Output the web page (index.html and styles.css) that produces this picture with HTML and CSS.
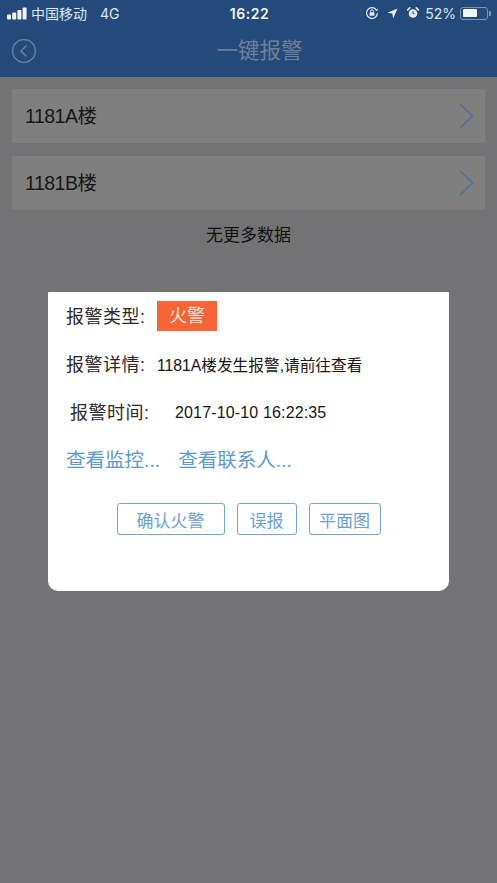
FILE: index.html
```html
<!DOCTYPE html>
<html lang="zh">
<head>
<meta charset="utf-8">
<title>一键报警</title>
<link rel="stylesheet" href="styles.css">
</head>
<body>
<div class="app">
  <header class="top">
    <div class="status">
      <div class="status-left">
        <svg class="signal" width="20" height="13" viewBox="0 0 20 13"><rect x="0" y="7.5" width="4" height="5" rx="1"/><rect x="5.2" y="5.5" width="4" height="7" rx="1"/><rect x="10.4" y="3" width="4" height="9.5" rx="1"/><rect x="15.6" y=".5" width="4" height="12" rx="1"/></svg>
        <span class="carrier">中国移动</span>
        <span class="net">4G</span>
      </div>
      <div class="clock">16:22</div>
      <div class="status-right">
        <svg class="st-icon" width="14" height="14" viewBox="0 0 14 14"><path d="M11.6 4.2A5.4 5.4 0 1 0 12.4 7" fill="none" stroke="#e6ebf2" stroke-width="1.2"/><path d="M10.2 4.4l2.2.4.3-2.3z" fill="#e6ebf2"/><rect x="4.6" y="6.2" width="4.8" height="3.6" rx=".5" fill="#e6ebf2"/><path d="M5.6 6.2V5.2a1.4 1.4 0 0 1 2.8 0v1" fill="none" stroke="#e6ebf2"/></svg>
        <svg class="st-icon arrow" width="11" height="11" viewBox="0 0 12 12"><path d="M11.5.5L.5 5.2l5.3.9.9 5.4z" fill="#e6ebf2"/></svg>
        <svg class="st-icon alarm" width="12" height="12" viewBox="0 0 14 14"><circle cx="7" cy="7.6" r="5" fill="#e6ebf2"/><path d="M7 4.8v3h2" fill="none" stroke="#234a7a" stroke-width="1"/><path d="M.8 3.4L3.2 1M13.2 3.4L10.8 1" stroke="#e6ebf2" stroke-width="1.8" stroke-linecap="round"/></svg>
        <span class="pct">52%</span>
        <span class="battery"><span class="battery-fill"></span></span>
        <span class="battery-tip"></span>
      </div>
    </div>
    <div class="navbar">
      <svg class="back" width="26" height="26" viewBox="0 0 26 26"><circle cx="13" cy="13" r="11.4" fill="none" stroke="#6b7f99" stroke-width="1.5"/><path d="M15.4 7.6L10 13l5.4 5.4" fill="none" stroke="#6b7f99" stroke-width="1.5"/></svg>
      <h1 class="title">一键报警</h1>
    </div>
  </header>

  <main class="list">
    <div class="row"><span class="row-name">1181A楼</span><svg class="chev" width="15" height="26" viewBox="0 0 15 26"><path d="M1.2 1L13.4 13 1.2 25" fill="none" stroke="#4f6f99" stroke-width="1.6"/></svg></div>
    <div class="row"><span class="row-name">1181B楼</span><svg class="chev" width="15" height="26" viewBox="0 0 15 26"><path d="M1.2 1L13.4 13 1.2 25" fill="none" stroke="#4f6f99" stroke-width="1.6"/></svg></div>
    <p class="nomore">无更多数据</p>
  </main>

  <section class="modal">
    <div class="field type-field">
      <span class="label">报警类型:</span>
      <span class="tag">火警</span>
    </div>
    <div class="field detail-field">
      <span class="label">报警详情:</span>
      <span class="value">1181A楼发生报警,请前往查看</span>
    </div>
    <div class="field time-field">
      <span class="label">报警时间:</span>
      <span class="value">2017-10-10 16:22:35</span>
    </div>
    <div class="links">
      <a class="link">查看监控...</a>
      <a class="link">查看联系人...</a>
    </div>
    <div class="actions">
      <button class="btn btn-confirm">确认火警</button>
      <button class="btn btn-false">误报</button>
      <button class="btn btn-plan">平面图</button>
    </div>
  </section>
</div>
</body>
</html>
```
FILE: styles.css
```css
* { box-sizing: border-box; }
html, body { margin: 0; padding: 0; }
body {
  width: 497px;
  height: 883px;
  overflow: hidden;
  background: #737375;
  font-family: "Liberation Sans", "Noto Sans CJK SC", sans-serif;
}
.app { position: relative; width: 497px; height: 883px; }

.top { height: 77px; background: #234a7a; }
.status {
  height: 26px;
  padding: 0 6px 0 7px;
  display: grid;
  grid-template-columns: 1fr auto 1fr;
  align-items: center;
  color: #dfe5ee;
  font-family: Inter, "Noto Sans CJK SC", sans-serif;
  font-size: 14px;
}
.status-left { display: flex; align-items: center; }
.signal { fill: #eef2f7; margin-right: 4px; flex: none; }
.net { margin-left: 13px; font-size: 14px; }
.clock { color: #f2f4f8; font-weight: 600; font-size: 14px; letter-spacing: .5px; padding-left: 1px; }
.status-right { display: flex; align-items: center; justify-content: flex-end; }
.st-icon { flex: none; }
.arrow { margin-left: 8px; }
.alarm { margin-left: 9px; }
.pct { margin-left: 6px; font-size: 14px; }
.battery {
  margin-left: 4px;
  width: 28px;
  height: 13px;
  border: 1px solid #7d93b0;
  border-radius: 3px;
  padding: 1.5px;
  display: block;
}
.battery-fill { display: block; width: 14px; height: 100%; background: #f2f4f8; border-radius: 1px; }
.battery-tip { width: 2px; height: 5px; margin-left: 1px; background: #7d93b0; border-radius: 0 1px 1px 0; }

.navbar { position: relative; height: 51px; padding-left: 22px; display: flex; align-items: center; justify-content: center; }
.back { position: absolute; left: 11px; top: 12px; }
.title { margin: 0 0 7px; font-size: 21.5px; font-weight: 400; color: #6f8096; }

.list { padding: 12px 12px 0; }
.row {
  height: 54px;
  margin-bottom: 13px;
  padding: 0 11px 0 13px;
  background: #7f7f7f;
  border-radius: 2px;
  display: flex;
  align-items: center;
  justify-content: space-between;
}
.row-name { margin-bottom: 3px; font-size: 19.5px; color: #161616; letter-spacing: -.5px; }
.chev { flex: none; }
.nomore { margin: 0; padding-top: 1px; height: 24px; line-height: 24px; text-align: center; font-size: 17px; color: #111; }

.modal {
  position: absolute;
  left: 48px;
  top: 292px;
  width: 401px;
  height: 299px;
  background: #fff;
  border-radius: 1px 1px 10px 10px;
  padding: 9px 18px 0;
  color: #222;
}
.field { display: flex; align-items: center; }
.label { flex: none; width: 78px; margin-bottom: 2px; font-size: 18px; letter-spacing: .5px; color: #2a2a2a; white-space: nowrap; }
.value { font-size: 15.7px; color: #161616; white-space: nowrap; }
.type-field { height: 30px; }
.tag {
  margin-left: 13px;
  width: 60px;
  height: 30px;
  line-height: 31px;
  text-align: center;
  background: #f76436;
  color: #fde3d8;
  font-size: 18px;
}
.detail-field { height: 24px; margin-top: 21px; }
.detail-field .value { margin-left: 13px; }
.time-field { height: 24px; margin-top: 24px; padding-left: 4px; }
.time-field .value { margin-left: 27px; margin-top: 1px; font-size: 16px; letter-spacing: .15px; }
.links { margin-top: 24px; height: 24px; line-height: 25px; display: flex; gap: 18px; }
.link { font-size: 19.5px; color: #5b9ad6; }
.actions { margin-top: 31px; display: flex; justify-content: center; gap: 12px; }
.btn {
  height: 32px;
  padding: 0;
  background: #fff;
  border: 1.5px solid #6ea6de;
  border-radius: 3px;
  color: #6a9fd4;
  font-family: inherit;
  font-size: 17px;
}
.btn-confirm { width: 108px; }
.btn-false { width: 60px; }
.btn-plan { width: 72px; }
```
